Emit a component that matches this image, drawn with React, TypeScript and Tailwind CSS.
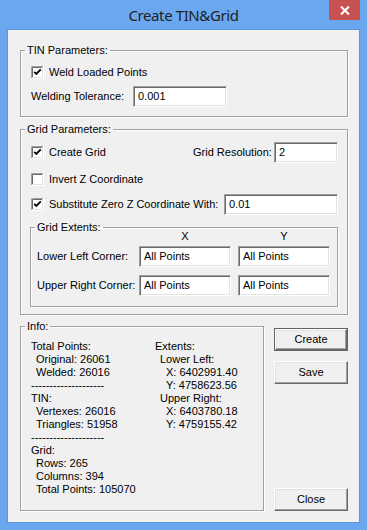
const etched = 'border border-[#a0a0a0] shadow-[inset_1px_1px_0_#fff,1px_1px_0_#fff]';

function Check({ checked }: { checked?: boolean }) {
  return (
    <svg width="13" height="13" viewBox="0 0 13 13" className="shrink-0">
      <rect x="0" y="0" width="13" height="13" fill="#fff" />
      <path d="M0.5 12 V0.5 H12" stroke="#a0a0a0" fill="none" />
      <path d="M1.5 11 V1.5 H11" stroke="#696969" fill="none" />
      <path d="M0 12.5 H12.5 V0" stroke="#fff" fill="none" />
      <path d="M1 11.5 H11.5 V1" stroke="#e3e3e3" fill="none" />
      {checked && (
        <path d="M3.2 5.8 L5.3 7.9 L9.8 3.4" stroke="#000" strokeWidth="1.9" fill="none" />
      )}
    </svg>
  );
}

function Field({ value, w }: { value: string; w: string }) {
  return (
    <div
      className={`${w} h-[21px] shrink-0 bg-white border border-t-[#a0a0a0] border-l-[#a0a0a0] border-b-white border-r-white shadow-[inset_1px_1px_0_#696969,inset_-1px_-1px_0_#e3e3e3] flex items-center pl-[4px]`}
    >
      {value}
    </div>
  );
}

function CheckRow({ checked, label }: { checked?: boolean; label: string }) {
  return (
    <div className="flex items-center gap-[5px]">
      <Check checked={checked} />
      <span>{label}</span>
    </div>
  );
}

function Legend({ text }: { text: string }) {
  return <legend className="ml-[4px] px-[2px] leading-[14px]">{text}</legend>;
}

function Button({ label, primary }: { label: string; primary?: boolean }) {
  return (
    <div className={`w-[74px] h-[23px] flex ${primary ? 'border border-[#646464]' : ''}`}>
      <div className="flex-1 flex items-center justify-center bg-[#f0f0f0] border border-t-white border-l-white border-b-[#696969] border-r-[#696969] shadow-[inset_-1px_-1px_0_#a0a0a0,inset_1px_1px_0_#e3e3e3]">
        {label}
      </div>
    </div>
  );
}

const left = [
  ['Total Points:', 0],
  ['Original: 26061', 1],
  ['Welded: 26016', 1],
  ['--------------------', 0],
  ['TIN:', 0],
  ['Vertexes: 26016', 1],
  ['Triangles: 51958', 1],
  ['--------------------', 0],
  ['Grid:', 0],
  ['Rows: 265', 1],
  ['Columns: 394', 1],
  ['Total Points: 105070', 1],
] as const;

const right = [
  ['Extents:', 0],
  ['Lower Left:', 1],
  ['X: 6402991.40', 2],
  ['Y: 4758623.56', 2],
  ['Upper Right:', 1],
  ['X: 6403780.18', 2],
  ['Y: 4759155.42', 2],
] as const;

const indent = ['pl-0', 'pl-[5px]', 'pl-[11px]'];

export default function App() {
  return (
    <div className="w-[367px] h-[530px] bg-[#6ba7ef] font-['Liberation_Sans',Arial,sans-serif] text-[11px] leading-[13px] text-black">
      <div className="h-[29px] grid grid-cols-[1fr_auto_1fr] items-start">
        <div />
        <div className="pt-[5px] text-[15px] leading-[20px] tracking-[-0.4px] text-[#1e1e1e] font-['Noto_Sans',sans-serif]">
          Create TIN&amp;Grid
        </div>
        <div className="flex justify-end pr-[7px]">
          <div className="w-[31px] h-[20px] bg-[#c75050] flex items-center justify-center">
            <svg width="10" height="9" viewBox="0 0 10 9">
              <path d="M1 0.5 L9 8.5 M9 0.5 L1 8.5" stroke="#fff" strokeWidth="2" />
            </svg>
          </div>
        </div>
      </div>

      <div className="ml-[7px] w-[353px] h-[494px] border border-[#5a95dd] bg-[#f0f0f0] pt-[13px]">
        <fieldset className={`ml-[12px] w-[328px] ${etched}`}>
          <Legend text="TIN Parameters:" />
          <div className="pl-[10px] pt-[9px] pb-[9px]">
            <CheckRow checked label="Weld Loaded Points" />
            <div className="mt-[7px] flex items-center">
              <span className="w-[102px]">Welding Tolerance:</span>
              <Field value="0.001" w="w-[94px]" />
            </div>
          </div>
        </fieldset>

        <fieldset className={`mt-[5px] ml-[12px] w-[328px] ${etched}`}>
          <Legend text="Grid Parameters:" />
          <div className="pt-[6px] pb-[7px]">
            <div className="pl-[10px] flex items-center">
              <div className="w-[162px]">
                <CheckRow checked label="Create Grid" />
              </div>
              <span className="w-[81px]">Grid Resolution:</span>
              <Field value="2" w="w-[64px]" />
            </div>
            <div className="pl-[10px] mt-[10px]">
              <CheckRow label="Invert Z Coordinate" />
            </div>
            <div className="pl-[10px] mt-[8px] flex items-center">
              <div className="w-[193px]">
                <CheckRow checked label="Substitute Zero Z Coordinate With:" />
              </div>
              <Field value="0.01" w="w-[114px]" />
            </div>

            <fieldset className={`mt-[5px] ml-[9px] w-[308px] ${etched}`}>
              <Legend text="Grid Extents:" />
              <div className="pl-[6px] pb-[10px]">
                <div className="-mt-[4px] flex">
                  <div className="w-[102px]" />
                  <div className="w-[92px] text-center">X</div>
                  <div className="w-[7px]" />
                  <div className="w-[92px] text-center">Y</div>
                </div>
                <div className="mt-[3px] flex items-center">
                  <span className="w-[102px]">Lower Left Corner:</span>
                  <Field value="All Points" w="w-[92px]" />
                  <div className="w-[7px]" />
                  <Field value="All Points" w="w-[92px]" />
                </div>
                <div className="mt-[8px] flex items-center">
                  <span className="w-[102px]">Upper Right Corner:</span>
                  <Field value="All Points" w="w-[92px]" />
                  <div className="w-[7px]" />
                  <Field value="All Points" w="w-[92px]" />
                </div>
              </div>
            </fieldset>
          </div>
        </fieldset>

        <div className="mt-[4px] flex">
          <fieldset className={`ml-[12px] w-[244px] ${etched}`}>
            <Legend text="Info:" />
            <div className="pl-[10px] pt-[7px] pb-[11px] flex">
              <div className="w-[124px]">
                {left.map(([t, l], i) => (
                  <div key={i} className={`${indent[l]} whitespace-pre`}>
                    {t}
                  </div>
                ))}
              </div>
              <div>
                {right.map(([t, l], i) => (
                  <div key={i} className={indent[l]}>
                    {t}
                  </div>
                ))}
              </div>
            </div>
          </fieldset>
          <div className="ml-[10px] flex flex-col">
            <div className="mt-[9px]">
              <Button label="Create" primary />
            </div>
            <div className="mt-[10px]">
              <Button label="Save" />
            </div>
            <div className="mt-[104px]">
              <Button label="Close" />
            </div>
          </div>
        </div>
      </div>
    </div>
  );
}
